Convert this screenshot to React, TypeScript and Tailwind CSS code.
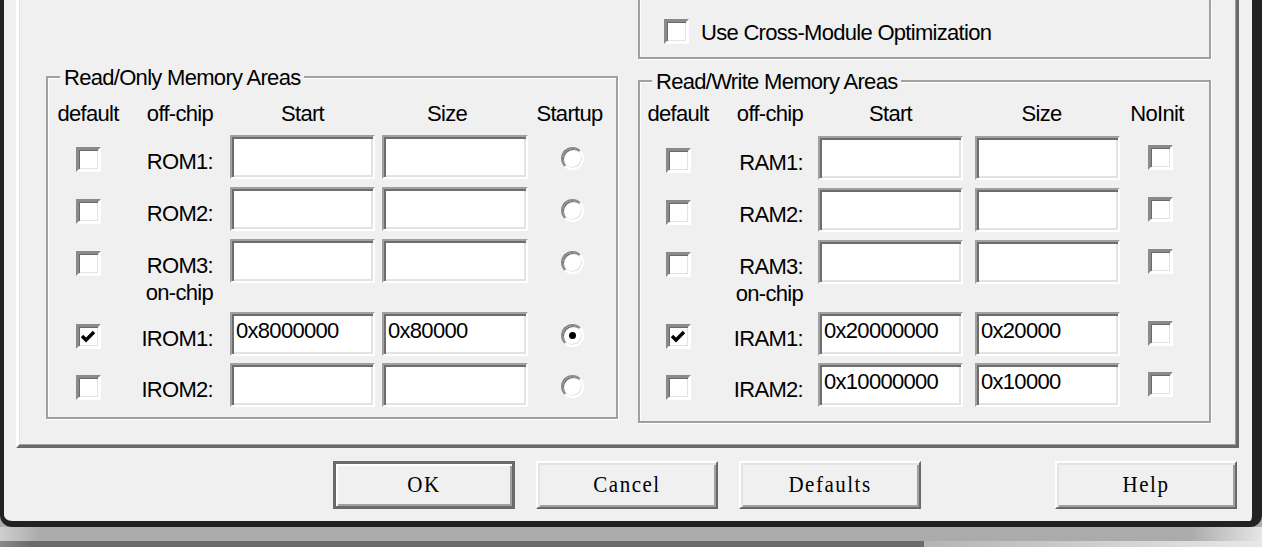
import React from "react";

const sans = "font-['Liberation_Sans',Arial,sans-serif]";
const serif = "font-['Liberation_Serif','Times_New_Roman',serif]";

type Layout = {
  mt: string;
  pt: string;
  firstGap: string;
  chipGap: string;
  col1: string;
  col2: string;
  gapStart: string;
  gapSize: string;
  sizeW: string;
  col5: string;
  sizeHeadPr: string;
  lastHeadPr: string;
  lastPt: string;
};

type Row = {
  label: string;
  checked?: boolean;
  start?: string;
  size?: string;
  lastOn?: boolean;
};

const Checkbox: React.FC<{ checked?: boolean }> = ({ checked }) => (
  <div className="w-[25px] h-[25px] shrink-0 bg-white border-[3px] border-t-[#8a8a8a] border-l-[#8a8a8a] border-r-white border-b-white shadow-[inset_1px_1px_0_#696969,inset_-1px_-1px_0_#e3e3e3] flex items-center justify-center">
    {checked && (
      <svg width="16" height="16" viewBox="0 0 16 16">
        <polyline points="2,7 6,11 14,3" fill="none" stroke="#000" strokeWidth="3.4" />
      </svg>
    )}
  </div>
);

const Radio: React.FC<{ checked?: boolean }> = ({ checked }) => (
  <div className="w-[23px] h-[23px] shrink-0 rounded-full bg-white border-2 border-t-[#8a8a8a] border-l-[#8a8a8a] border-r-white border-b-white shadow-[inset_1px_1px_0_#696969,inset_-1px_-1px_0_#e3e3e3] flex items-center justify-center">
    {checked && <div className="w-[7px] h-[7px] rounded-full bg-black" />}
  </div>
);

const Edit: React.FC<{ value?: string; className?: string }> = ({ value, className }) => (
  <div
    className={`h-[44px] shrink-0 bg-white border-2 border-t-[#a0a0a0] border-l-[#a0a0a0] border-r-white border-b-white shadow-[inset_2px_2px_0_#6d6d6d,inset_-2px_-2px_0_#e3e3e3] pl-[4px] pt-[4px] leading-[26px] ${className ?? ""}`}
  >
    {value}
  </div>
);

const MemoryGroup: React.FC<{
  title: string;
  last: string;
  kind: "radio" | "check";
  rows: Row[];
  chip: Row[];
  l: Layout;
}> = ({ title, last, kind, rows, chip, l }) => {
  const renderRow = (r: Row, gap: string) => (
    <div key={r.label} className={`flex h-[44px] ${gap}`}>
      <div className={`${l.col1} shrink-0 flex justify-center pt-[12px]`}>
        <Checkbox checked={r.checked} />
      </div>
      <div className={`${l.col2} shrink-0 text-right pt-[14px] leading-[26px]`}>{r.label}</div>
      <div className={`${l.gapStart} shrink-0`} />
      <Edit value={r.start} className="w-[145px]" />
      <div className={`${l.gapSize} shrink-0`} />
      <Edit value={r.size} className={l.sizeW} />
      <div className={`${l.col5} shrink-0 flex justify-center ${l.lastPt}`}>
        {kind === "radio" ? <Radio checked={r.lastOn} /> : <Checkbox checked={r.lastOn} />}
      </div>
    </div>
  );

  return (
    <div
      className={`relative h-[343px] border-2 border-[#a0a0a0] shadow-[inset_1px_1px_0_#fff,1px_1px_0_#fff] ${l.mt}`}
    >
      <span className="absolute left-[12px] top-[-13px] bg-[#f0f0f0] px-[4px] leading-[26px] whitespace-nowrap">
        {title}
      </span>
      <div className={`flex flex-col ${l.pt}`}>
        <div className="flex h-[26px] leading-[29px]">
          <div className={`${l.col1} shrink-0 text-center`}>default</div>
          <div className={`${l.col2} shrink-0 text-right`}>off-chip</div>
          <div className={`${l.gapStart} shrink-0`} />
          <div className="w-[145px] shrink-0 text-center">Start</div>
          <div className={`${l.gapSize} shrink-0`} />
          <div className={`${l.sizeW} shrink-0 text-center ${l.sizeHeadPr}`}>Size</div>
          <div className={`${l.col5} shrink-0 text-center ${l.lastHeadPr}`}>{last}</div>
        </div>
        {rows.map((r, i) => renderRow(r, i === 0 ? l.firstGap : "mt-[8px]"))}
        <div className="flex h-[20px] leading-[20px]">
          <div className={`${l.col1} shrink-0`} />
          <div className={`${l.col2} shrink-0 text-right`}>on-chip</div>
        </div>
        {chip.map((r, i) => renderRow(r, i === 0 ? l.chipGap : "mt-[7px]"))}
      </div>
    </div>
  );
};

const leftLayout: Layout = {
  mt: "mt-[76px]",
  pt: "pt-[21px]",
  firstGap: "mt-[10px]",
  chipGap: "mt-[9px]",
  col1: "w-[80px]",
  col2: "w-[85px]",
  gapStart: "w-[17px]",
  gapSize: "w-[7px]",
  sizeW: "w-[146px]",
  col5: "w-[88px]",
  sizeHeadPr: "pr-[16px]",
  lastHeadPr: "pr-[5px]",
  lastPt: "pt-[12px]",
};

const rightLayout: Layout = {
  mt: "mt-[21px]",
  pt: "pt-[17px]",
  firstGap: "mt-[11px]",
  chipGap: "mt-[8px]",
  col1: "w-[76px]",
  col2: "w-[87px]",
  gapStart: "w-[15px]",
  gapSize: "w-[12px]",
  sizeW: "w-[145px]",
  col5: "w-[80px]",
  sizeHeadPr: "pr-[12px]",
  lastHeadPr: "pr-[6px]",
  lastPt: "pt-[9px]",
};

const Button: React.FC<{ label: string; isDefault?: boolean; className?: string }> = ({
  label,
  isDefault,
  className,
}) => (
  <button
    className={`h-[48px] w-[182px] shrink-0 bg-[#f0f0f0] flex items-center justify-center text-[21px] tracking-[1.5px] text-black ${serif} ${
      isDefault
        ? "border-[3px] border-[#6b6b6b] shadow-[inset_2px_2px_0_#fff,inset_-2px_-2px_0_#a0a0a0]"
        : "border-2 border-t-white border-l-white border-r-[#696969] border-b-[#696969] shadow-[inset_2px_2px_0_#e3e3e3,inset_-2px_-2px_0_#a0a0a0]"
    } ${className ?? ""}`}
  >
    <span className="inline-block scale-y-[1.12] leading-none pb-[2px]">{label}</span>
  </button>
);

export default function App() {
  return (
    <div className={`w-[1262px] h-[547px] overflow-hidden flex flex-col bg-[#acacac] text-black text-[22px] tracking-[-0.7px] ${sans}`}>
      <div className="h-[527px] shrink-0 flex flex-col bg-[#f0f0f0] border-l-4 border-r-[10px] border-b-[6px] border-[#222] rounded-b-[12px]">
        {/* tab page */}
        <div className="ml-[12px] mr-[13px] h-[448px] shrink-0 flex gap-[20px] pl-[27px] border-l-[3px] border-l-white border-r-[3px] border-r-[#696969] border-b-[3px] border-b-[#696969] shadow-[inset_-1px_-1px_0_#a0a0a0,inset_1px_0_0_#e3e3e3]">
          <div className="w-[572px] shrink-0">
            <MemoryGroup
              title="Read/Only Memory Areas"
              last="Startup"
              kind="radio"
              l={leftLayout}
              rows={[{ label: "ROM1:" }, { label: "ROM2:" }, { label: "ROM3:" }]}
              chip={[
                { label: "IROM1:", checked: true, start: "0x8000000", size: "0x80000", lastOn: true },
                { label: "IROM2:" },
              ]}
            />
          </div>
          <div className="w-[573px] shrink-0 flex flex-col">
            <div className="h-[59px] shrink-0 border-l-2 border-r-2 border-b-2 border-[#a0a0a0] shadow-[inset_1px_0_0_#fff,1px_1px_0_#fff] flex items-start gap-[12px] pt-[19px] pl-[24px]">
              <Checkbox />
              <span className="mt-[1px] leading-[26px] whitespace-nowrap">Use Cross-Module Optimization</span>
            </div>
            <MemoryGroup
              title="Read/Write Memory Areas"
              last="NoInit"
              kind="check"
              l={rightLayout}
              rows={[{ label: "RAM1:" }, { label: "RAM2:" }, { label: "RAM3:" }]}
              chip={[
                { label: "IRAM1:", checked: true, start: "0x20000000", size: "0x20000" },
                { label: "IRAM2:", start: "0x10000000", size: "0x10000" },
              ]}
            />
          </div>
        </div>

        {/* dialog buttons */}
        <div className="flex mt-[13px] ml-[329px]">
          <Button label="OK" isDefault />
          <Button label="Cancel" className="ml-[21px]" />
          <Button label="Defaults" className="ml-[21px]" />
          <Button label="Help" className="ml-[134px]" />
        </div>
      </div>

      {/* window strip below the dialog */}
      <div className="h-[14px] shrink-0 bg-[linear-gradient(90deg,#cfcfcf_0px,#ababab_40px,#ababab_1190px,#e6e6e6_1262px)]" />
      <div className="h-[6px] shrink-0 flex">
        <div className="w-[924px] bg-[linear-gradient(90deg,#8a8a8a_0px,#6b6b6b_30px)]" />
        <div className="flex-1 bg-[linear-gradient(90deg,#b4b4b4,#e8e8e8)]" />
      </div>
    </div>
  );
}
